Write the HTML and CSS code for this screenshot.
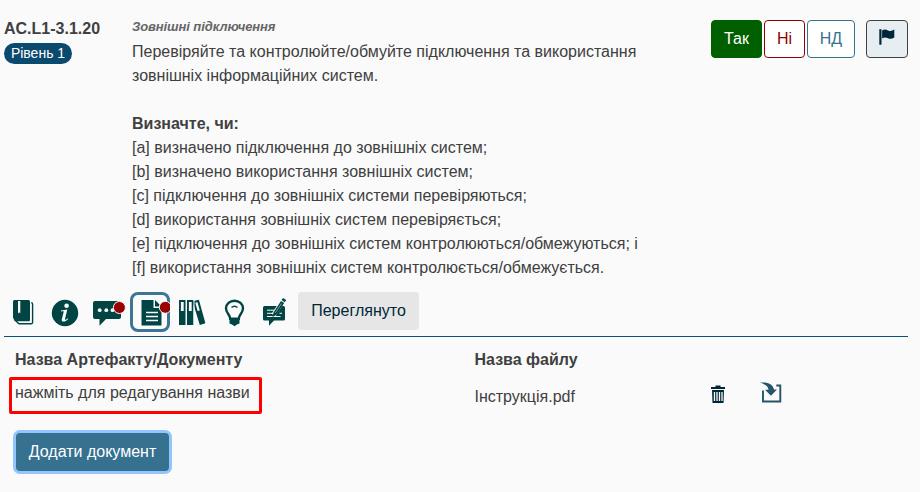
FILE: index.html
```html
<!DOCTYPE html>
<html lang="uk">
<head>
<meta charset="utf-8">
<title>AC.L1-3.1.20</title>
<link rel="stylesheet" href="styles.css">
</head>
<body>
<main class="page">
  <section class="question">
    <div class="ident">
      <div class="code">AC.L1-3.1.20</div>
      <span class="level">Рівень 1</span>
    </div>
    <div class="text">
      <div class="subtitle">Зовнішні підключення</div>
      <p>Перевіряйте та контролюйте/обмуйте підключення та використання<br>зовнішніх інформаційних систем.</p>
      <p class="list"><b>Визначте, чи:</b><br>
      [a] визначено підключення до зовнішніх систем;<br>
      [b] визначено використання зовнішніх систем;<br>
      [c] підключення до зовнішніх системи перевіряються;<br>
      [d] використання зовнішніх систем перевіряється;<br>
      [e] підключення до зовнішніх систем контролюються/обмежуються; і<br>
      [f] використання зовнішніх систем контролюється/обмежується.</p>
    </div>
    <div class="answers">
      <button class="answer yes">Так</button>
      <button class="answer no">Ні</button>
      <button class="answer na">НД</button>
      <button class="answer flag" aria-label="Flag">
        <svg width="16" height="18" viewBox="0 0 16 18"><path d="M0.300 1.200h2.200v15.500H0.300z"/><path d="M3.100 2.400c2.200-1.600 4-1 5.900 0s3.900.8 6.300-.8v8c-2.400 1.500-4.300 1.600-6.300.6s-3.700-1.200-5.900.4z"/></svg>
      </button>
    </div>
  </section>

  <nav class="tools">
    <button class="tool" aria-label="Book"><svg viewBox="0 0 40 40">
      <path d="M10.500 8H24.500q1.500 0 1.500 1.500V28q0 1.200-1.500 1.200H12.500L9 26V9.500q0-1.500 1.500-1.500z"/>
      <path class="line" d="M27.300 10.700q1.300 0 1.300 1.500v18q0 1.600-1.600 1.600H15l-5-4.500" stroke-width="1.400"/>
      <path class="paper" d="M14 9h2.300v12.500l-1.150-1.200L14 21.500z"/>
    </svg></button>
    <button class="tool" aria-label="Info"><svg viewBox="0 0 40 40">
      <circle cx="19" cy="21" r="13.200"/>
      <circle class="paper" cx="20.600" cy="13.700" r="2.300"/>
      <path class="paper" d="M15 18.600l6.300-1-2.300 9.400c-.2 1 .5 1.200 2.700-.8l.5.700c-2.300 2.700-6.700 4.100-6.500.8l2-8c.1-.7-.9-.6-2.700-.3z"/>
    </svg></button>
    <button class="tool" aria-label="Comments"><svg viewBox="0 0 40 40">
      <path d="M7 9h24q2 0 2 2v14q0 2-2 2H18l-6.500 6.800V27H7q-2 0-2-2V11q0-2 2-2z"/>
      <g class="paper"><circle cx="11.700" cy="18.200" r="1.900"/><circle cx="18.300" cy="18.200" r="1.900"/><circle cx="24.500" cy="18.200" r="1.900"/></g>
      <circle class="notice" cx="31.400" cy="15.500" r="6"/>
    </svg></button>
    <button class="tool active" aria-label="Documents"><svg viewBox="0 0 40 40">
      <path d="M11.500 8h12v8h8v17.500h-20z"/><path d="M25 8l6.500 6.500H25z"/>
      <path class="gap" d="M16 20.500h12M16 24.500h12M16 28.500h12" stroke-width="1.500"/>
      <circle class="notice" cx="35.300" cy="15.300" r="6"/>
    </svg></button>
    <button class="tool" aria-label="References"><svg viewBox="0 0 40 40">
      <path d="M7 8h6.500v25H7zM15 8h6.500v25H15zM20.500 9.200l6.400-1.500 6.500 23.500-5.600 1.800-5.800-19z"/>
      <path class="gap" d="M10.300 10v9M18.300 10v9" stroke-width="2.800"/>
      <path class="gap" d="M22 8v25" stroke-width="1"/>
      <path class="gap" d="M24.400 10.500l2.300 8.200" stroke-width="2.300"/>
    </svg></button>
    <button class="tool" aria-label="Hints"><svg viewBox="0 0 40 40">
      <path class="line" d="M16.200 26.800c0-4.200-4.200-5.500-4.200-10.500a8.500 7.600 0 0 1 17 0c0 5-4.200 6.300-4.200 10.500z" stroke-width="2.400"/>
      <path class="line" d="M17.500 15.500q3-2.600 6 0" stroke-width="1.500"/>
      <path d="M15.500 27h10v4.500L23 32.500l-2.500 1.800L18 32.500l-2.500-1z"/>
    </svg></button>
    <button class="tool" aria-label="Feedback"><svg viewBox="0 0 40 40">
      <path d="M8.500 14H27.500q1.500 0 1.500 1.500V27q0 1.500-1.500 1.500H18l-5 5.300v-5.300H8.500Q7 28.500 7 27V15.500Q7 14 8.500 14z"/>
      <path class="gap" d="M11 18.200h8M11 21.300h6M11 24.500h13.500M23.500 21.300h2.500" stroke-width="1"/>
      <path class="gap" d="M17.500 23L26.500 9.500" stroke-width="4.600"/>
      <path d="M17.500 20.500L25 9l3.200 2-7.500 11.500-4.200 2.500zM25.600 8l1.400-2 3.200 2-1.400 2.200z"/>
      <path class="gap" d="M19.300 20.800l6.200-9.300" stroke-width=".5"/>
    </svg></button>
    <button class="reviewed">Переглянуто</button>
  </nav>

  <section class="documents">
    <div class="heading">Назва Артефакту/Документу</div>
    <div class="heading">Назва файлу</div>
    <div></div><div></div>
    <div class="title-edit">нажміть для редагування назви</div>
    <div class="file">Інструкція.pdf</div>
    <svg class="trash" viewBox="0 0 14 18"><path d="M0 2h14v2H0zM4.500.5h5V2h-5zM1 5h12l-.5 13h-11z"/><path class="gap" d="M3.500 7v9M6 7v9M8.500 7v9M11 7v9" stroke-width="1.300"/></svg>
    <svg class="import" viewBox="0 0 22 22"><path class="line" d="M3 8.500v11h17.300V3.500h-4" stroke-width="1.900"/><path d="M0 .6c7.500-1 13 1.400 14 7h3L11 13.700 5 7.700h3.600C8 4 4.500 2 0 .6z"/></svg>
  </section>
  <button class="add">Додати документ</button>
</main>
</body>
</html>
```
FILE: styles.css
```css
* { box-sizing: border-box; }
body {
  margin: 0;
  background: #fafafa;
  color: #404040;
  font: 16px/24px "Liberation Sans", Arial, sans-serif;
}
button { font: inherit; cursor: pointer; padding: 0; margin: 0; }
.page { height: 492px; padding: 16px 12px 0 4px; overflow: hidden; }
.question { display: grid; grid-template-columns: 128px 1fr auto; height: 276px; }
.code { font-weight: bold; line-height: 25px; }
.level {
  display: block; width: 68px; height: 21px; margin-top: 2px;
  border-radius: 11px; background: #0b4a6f; color: #fff;
  font-size: 14px; line-height: 21px; text-align: center;
}
.subtitle { font-size: 13px; line-height: 22px; height: 24px; font-weight: bold; font-style: italic; letter-spacing: -0.1px; color: #666; }
.text p { margin: 0; white-space: nowrap; }
.text .list { margin-top: 24px; }
.answers { display: flex; gap: 2px; padding-top: 4px; }
.answer { height: 38px; border: 1px solid; border-radius: 4px; background: #fff; }
.yes { width: 51px; background: #006000; border-color: #006000; color: #fff; }
.no { width: 41px; color: #900000; }
.na { width: 48px; color: #367190; }
.flag { width: 42px; margin-left: 9px; border-color: #404040; background: #e6eef2; }
.flag svg { display: block; margin: -5px auto 0; fill: #002738; }
.tools { display: flex; gap: 2px; height: 45px; border-bottom: 1px solid #0b5077; }
.tool { width: 40px; height: 40px; border: 0; background: none; }
.tool svg { display: block; width: 40px; height: 40px; fill: #004444; }
.tool.active { position: relative; border-radius: 8px; box-shadow: inset 0 0 0 3px #3b7695; }
svg .paper { fill: #fafafa; }
svg .gap { fill: none; stroke: #fafafa; }
svg .line { fill: none; stroke: #004444; }
svg .notice { fill: #990000; stroke: #fafafa; stroke-width: 1; }
.reviewed { width: 121px; height: 38px; border: 0; border-radius: 4px; background: #e6e6e6; color: #002738; }
.documents { display: grid; grid-template-columns: 459.500px 243px 50px 1fr; grid-template-rows: 30px 36px; padding: 10px 0 0 11px; }
.heading { font-weight: bold; line-height: 25px; }
.title-edit {
  width: 253px; height: 37px; margin-left: -6px; padding-left: 3px;
  border: 3px solid #f00; border-radius: 2px; line-height: 25px; white-space: nowrap;
}
.file { line-height: 39px; }
.trash { width: 14px; height: 18px; margin: 8px 0 0 -6.500px; fill: #002738; }
.import { width: 22px; height: 22px; margin: 5px 0 0 -8px; fill: #245568; }
.import .line { stroke: #245568; }
.add {
  display: block; width: 153px; height: 38px; margin: 20px 0 0 12px;
  border: 0; border-radius: 4px; background: #367190; color: #fff; box-shadow: 0 0 0 3px #92c5fc;
}
```
